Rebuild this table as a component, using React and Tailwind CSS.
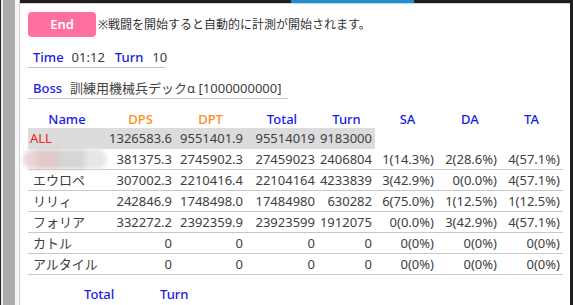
const rows = [
  { name: 'blur', v: ['381375.3', '2745902.3', '27459023', '2406804', '1(14.3%)', '2(28.6%)', '4(57.1%)'] },
  { name: 'エウロペ', v: ['307002.3', '2210416.4', '22104164', '4233839', '3(42.9%)', '0(0.0%)', '4(57.1%)'] },
  { name: 'リリィ', v: ['242846.9', '1748498.0', '17484980', '630282', '6(75.0%)', '1(12.5%)', '1(12.5%)'] },
  { name: 'フォリア', v: ['332272.2', '2392359.9', '23923599', '1912075', '0(0.0%)', '3(42.9%)', '4(57.1%)'] },
  { name: 'カトル', v: ['0', '0', '0', '0', '0(0%)', '0(0%)', '0(0%)'] },
  { name: 'アルタイル', v: ['0', '0', '0', '0', '0(0%)', '0(0%)', '0(0%)'] },
];

const cols = 'grid grid-cols-[78px_69px_71px_72px_57px_62px_63px_63px]';

const BlurName = () => (
  <div className="flex h-full items-center -ml-[5px]">
    <div className="flex h-[20px] w-[84px] blur-[2px]">
      <div className="w-[14px] rounded-l-full bg-[#ead6d6]" />
      <div className="w-[22px] bg-[#dfc9c9]" />
      <div className="w-[26px] bg-[#d6d6d6]" />
      <div className="w-[22px] rounded-r-full bg-[#e6e6e6]" />
    </div>
  </div>
);

const App = () => {
  return (
    <div
      className="flex h-[305px] w-[573px] overflow-hidden bg-white text-[13px] text-[#404040]"
      style={{ fontFamily: '"Noto Sans", "Noto Sans CJK JP", sans-serif' }}
    >
      <div className="w-px bg-[#1e2626]" />
      <div className="w-[2px] bg-[#e6eeee]" />
      <div className="w-[12px] bg-[#ababab]" />
      <div className="w-[4px] bg-[#f6f6f6]" />
      <div className="w-px bg-[#cfcfcf]" />
      <div className="flex flex-1 flex-col">
        <div className="flex h-[3px] bg-[#1f1f1f]">
          <div className="ml-[271px] w-[123px] bg-[#1b8fd2]" />
        </div>
        <div className="h-px bg-[#d4d4d4]" />
        <div className="pl-[8px]">
          <div className="mt-[8px] flex items-center">
            <button className="h-[25px] w-[68px] rounded-[4px] bg-[#ff6fa0] text-[13px] font-semibold text-white">
              End
            </button>
            <span className="ml-[2px] text-[12px] text-[#333]">
              ※戦闘を開始すると自動的に計測が開始されます。
            </span>
          </div>

          <div className="mt-[11px] flex h-[20px] w-[138px] items-center border-b border-[#c4c4c4] pl-[5px] leading-none">
            <span className="font-medium text-[#1a1ae0]">Time</span>
            <span className="ml-[8px]">01:12</span>
            <span className="ml-[10px] font-medium text-[#1a1ae0]">Turn</span>
            <span className="ml-[9px]">10</span>
          </div>

          <div className="mt-[11px] flex h-[20px] w-[260px] items-center border-b border-[#c4c4c4] pl-[5px] leading-none">
            <span className="font-medium text-[#1a1ae0]">Boss</span>
            <span className="ml-[8px]">訓練用機械兵デックα [1000000000]</span>
          </div>

          <div className="mt-[11px] w-[535px]">
            <div className={`${cols} h-[18px] items-center text-center font-medium leading-none`}>
              <div className="text-[#1a1ae6]">Name</div>
              <div className="text-[#ff8c1a]">DPS</div>
              <div className="text-[#ff8c1a]">DPT</div>
              <div className="text-[#1a1ae6]">Total</div>
              <div className="text-[#1a1ae6]">Turn</div>
              <div className="pl-[3px] text-[#1a1ae6]">SA</div>
              <div className="pl-[3px] text-[#1a1ae6]">DA</div>
              <div className="text-[#1a1ae6]">TA</div>
            </div>

            <div className={`${cols} h-[21px] items-center leading-none`}>
              <div className="flex h-full items-center bg-[#dcdcdc] pl-[2px] text-[#e8261c]">ALL</div>
              <div className="flex h-full items-center justify-end bg-[#dcdcdc] pr-[3px]">1326583.6</div>
              <div className="flex h-full items-center justify-end bg-[#dcdcdc] pr-[3px]">9551401.9</div>
              <div className="flex h-full items-center justify-end bg-[#dcdcdc] pr-[3px]">95514019</div>
              <div className="flex h-full items-center justify-end bg-[#dcdcdc] pr-[3px]">9183000</div>
              <div />
              <div />
              <div />
            </div>

            {rows.map((r, i) => (
              <div key={i} className={`${cols} h-[21px] items-center border-b border-[#c8c8c8] leading-none`}>
                {r.name === 'blur' ? (
                  <BlurName />
                ) : (
                  <div className="pl-[5px]">{r.name}</div>
                )}
                {r.v.map((v, j) => (
                  <div key={j} className="pr-[3px] text-right">
                    {v}
                  </div>
                ))}
              </div>
            ))}
          </div>

          <div className="mt-[13px] flex font-medium leading-none text-[#1a1ae6]">
            <div className="w-[56px]" />
            <div className="w-[28px] text-center">Total</div>
            <div className="w-[48px]" />
            <div className="w-[28px] text-center">Turn</div>
          </div>
        </div>
      </div>
      <div className="w-[3px] bg-[#1f1f1f]" />
    </div>
  );
};

export default App;
